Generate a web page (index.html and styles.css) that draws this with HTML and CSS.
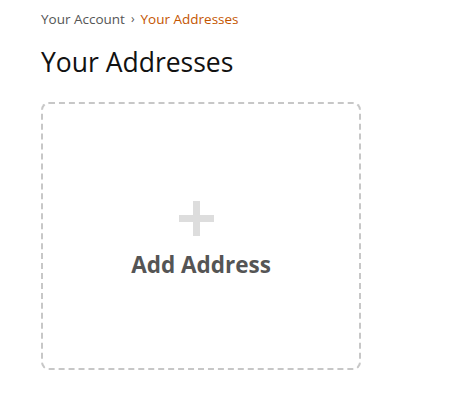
FILE: index.html
```html
<!DOCTYPE html>
<html lang="en">
<head>
    <meta charset="UTF-8">
    <title>Your Addresses</title>
    <link rel="stylesheet" href="styles.css">
</head>
<body>
<div class="page">
    <div class="breadcrumb">
        <a href="javascript:;" class="crumb">Your Account</a>
        <span class="crumb-sep">›</span>
        <span class="crumb-current">Your Addresses</span>
    </div>
    <h1 class="page-title">Your Addresses</h1>
    <a href="javascript:;" class="add-card">
        <span class="add-plus"></span>
        <span class="add-label">Add Address</span>
    </a>
</div>
</body>
</html>
```

FILE: styles.css
```css
body {
    margin: 0;
    background: #ffffff;
    font-family: "Open Sans", "Noto Sans", "Liberation Sans", sans-serif;
    color: #111111;
}

a {
    text-decoration: none;
}

.page {
    padding: 10px 41px 0 41px;
}

.breadcrumb {
    font-size: 13.5px;
    line-height: 18px;
    display: flex;
    align-items: center;
    gap: 6px;
}

.crumb {
    color: #555555;
}

.crumb-sep {
    color: #555555;
    font-size: 12px;
}

.crumb-current {
    color: #c45500;
}

.page-title {
    margin: 17px 0 23px 0;
    font-size: 26.5px;
    font-weight: 400;
    line-height: 34px;
}

.add-card {
    box-sizing: border-box;
    width: 320px;
    height: 268px;
    border: 2px dashed #c7c7c7;
    border-radius: 8px;
    display: flex;
    flex-direction: column;
    align-items: center;
    padding-top: 97px;
}

.add-plus {
    position: relative;
    width: 35px;
    height: 35px;
    margin-left: -9px;
}

.add-plus::before,
.add-plus::after {
    content: "";
    position: absolute;
    background: #dddddd;
}

.add-plus::before {
    left: 0;
    top: 14px;
    width: 35px;
    height: 7px;
}

.add-plus::after {
    left: 14px;
    top: 0;
    width: 7px;
    height: 35px;
}

.add-label {
    margin-top: 14px;
    font-size: 22.5px;
    line-height: 30px;
    font-weight: 700;
    color: #555555;
}
```
